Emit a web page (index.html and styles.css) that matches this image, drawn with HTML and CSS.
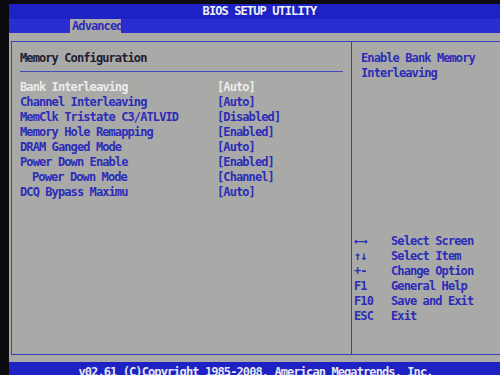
FILE: index.html
```html
<!DOCTYPE html>
<html>
<head>
<meta charset="utf-8">
<link rel="stylesheet" href="styles.css">
</head>
<body>
<div class="bios">
  <div class="title">BIOS SETUP UTILITY</div>
  <div class="tabs"><span class="tab">Advanced</span></div>
  <div class="body">
    <div class="frame">
      <div class="main">
        <div class="heading">Memory Configuration</div>
        <div class="sep"></div>
        <div class="rows">
          <div class="row sel"><span class="name">Bank Interleaving</span><span class="val">[Auto]</span></div>
          <div class="row"><span class="name">Channel Interleaving</span><span class="val">[Auto]</span></div>
          <div class="row"><span class="name">MemClk Tristate C3/ATLVID</span><span class="val">[Disabled]</span></div>
          <div class="row"><span class="name">Memory Hole Remapping</span><span class="val">[Enabled]</span></div>
          <div class="row"><span class="name">DRAM Ganged Mode</span><span class="val">[Auto]</span></div>
          <div class="row"><span class="name">Power Down Enable</span><span class="val">[Enabled]</span></div>
          <div class="row"><span class="name sub">Power Down Mode</span><span class="val">[Channel]</span></div>
          <div class="row"><span class="name">DCQ Bypass Maximu</span><span class="val">[Auto]</span></div>
        </div>
      </div>
      <div class="side">
        <div class="help">Enable Bank Memory<br>Interleaving</div>
        <div class="keys">
          <div class="key"><span class="k">←→</span><span>Select Screen</span></div>
          <div class="key"><span class="k">↑↓</span><span>Select Item</span></div>
          <div class="key"><span class="k">+-</span><span>Change Option</span></div>
          <div class="key"><span class="k">F1</span><span>General Help</span></div>
          <div class="key"><span class="k">F10</span><span>Save and Exit</span></div>
          <div class="key"><span class="k">ESC</span><span>Exit</span></div>
        </div>
      </div>
    </div>
  </div>
  <div class="footer">v02.61 (C)Copyright 1985-2008, American Megatrends, Inc.</div>
</div>
</body>
</html>
```
FILE: styles.css
```css
html, body {
  margin: 0;
  padding: 0;
  background: #0b0b10;
  width: 500px;
  height: 375px;
  overflow: hidden;
}
.bios {
  margin: 4px 0 0 9px;
  width: 491px;
  height: 371px;
  display: flex;
  flex-direction: column;
  font-family: "DejaVu Sans Mono", monospace;
  font-weight: bold;
  font-size: 12px;
  letter-spacing: -0.9px;
  line-height: 15px;
}
.title {
  height: 15px;
  background: #1e22c4;
  color: #f0f0f4;
  text-align: center;
  padding-left: 10px;
}
.tabs {
  height: 14px;
  background: #2a2ed2;
  padding-left: 61px;
  display: flex;
}
.tab {
  background: #a9aaa8;
  color: #2c2cb8;
  padding: 0 2px;
  line-height: 14px;
  width: 47px;
}
.body {
  height: 332px;
  background: #a9aaa8;
  padding: 8px 0 7px 2px;
  box-sizing: border-box;
  display: flex;
}
.frame {
  flex: 1;
  border: 1px solid #3a3ec4;
  border-right: none;
  display: flex;
}
.main {
  width: 339px;
  border-right: 1px solid #3a3ec4;
  padding-top: 9px;
}
.heading {
  color: #202030;
  padding-left: 8px;
}
.sep {
  margin: 5px 8px 0 8px;
  height: 1px;
  background: #4448c0;
}
.rows {
  margin-top: 8px;
}
.row {
  display: flex;
  color: #2c2cb8;
  padding-left: 8px;
}
.row.sel {
  color: #ececec;
}
.name {
  width: 197px;
}
.name.sub {
  padding-left: 12px;
  width: 185px;
}
.side {
  flex: 1;
  display: flex;
  flex-direction: column;
  color: #2c2cb8;
  padding-top: 9px;
}
.help {
  padding-left: 9px;
}
.keys {
  margin-top: auto;
  margin-bottom: 30px;
  padding-left: 2px;
}
.key {
  display: flex;
}
.k {
  width: 37px;
}
.footer {
  height: 10px;
  background: #1e22c4;
  color: #e8e8f0;
  text-align: center;
  padding-top: 3px;
  padding-left: 2px;
  overflow: hidden;
}
```
